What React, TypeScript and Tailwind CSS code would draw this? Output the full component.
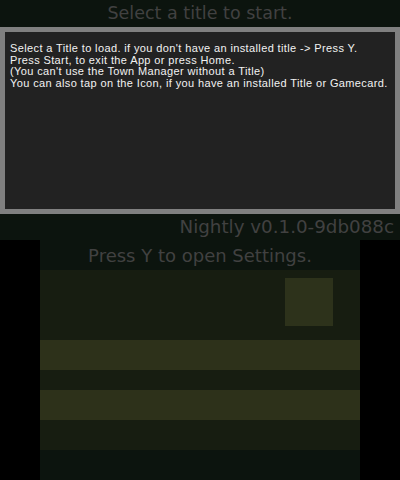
const dejavu = { fontFamily: '"DejaVu Sans", sans-serif' };

function TopScreen() {
  return (
    <div className="flex h-[240px] w-[400px] flex-col bg-[#0c140e]">
      <div
        className="flex h-[27px] items-center justify-center text-[17.5px] text-[#414141]"
        style={dejavu}
      >
        Select a title to start.
      </div>
      <div
        className="h-[187px] overflow-hidden whitespace-nowrap border-[5px] border-[#808080] bg-[#222222] pl-[5px] pt-[11px] text-[11px] leading-[11.7px] tracking-[0.38px] text-[#f2f2f2]"
        style={{ fontFamily: '"Liberation Sans", Arial, sans-serif' }}
      >
        <p>Select a Title to load. if you don&apos;t have an installed title -&gt; Press Y.</p>
        <p>Press Start, to exit the App or press Home.</p>
        <p>(You can&apos;t use the Town Manager without a Title)</p>
        <p>You can also tap on the Icon, if you have an installed Title or Gamecard.</p>
      </div>
      <div
        className="flex h-[26px] items-center justify-end pr-[6px] text-[18.3px] text-[#414141]"
        style={dejavu}
      >
        Nightly v0.1.0-9db088c
      </div>
    </div>
  );
}

function BottomScreen() {
  return (
    <div className="flex h-[240px] w-[400px] justify-center bg-black">
      <div className="flex w-[320px] flex-col">
        <div
          className="flex h-[30px] items-center justify-center text-[18px] text-[#414141] bg-[#0c140e]"
          style={dejavu}
        >
          Press Y to open Settings.
        </div>
        <div className="flex h-[70px] justify-end bg-[#171d11] pr-[27px] pt-[8px]">
          <div className="h-[48px] w-[48px] bg-[#2d321b]" />
        </div>
        <div className="h-[30px] bg-[#2d311a]" />
        <div className="h-[20px] bg-[#171d11]" />
        <div className="h-[30px] bg-[#2d311a]" />
        <div className="h-[30px] bg-[#171d11]" />
        <div className="h-[30px] bg-[#0c140e]" />
      </div>
    </div>
  );
}

export default function App() {
  return (
    <div className="h-[480px] w-[400px] overflow-hidden">
      <TopScreen />
      <BottomScreen />
    </div>
  );
}
